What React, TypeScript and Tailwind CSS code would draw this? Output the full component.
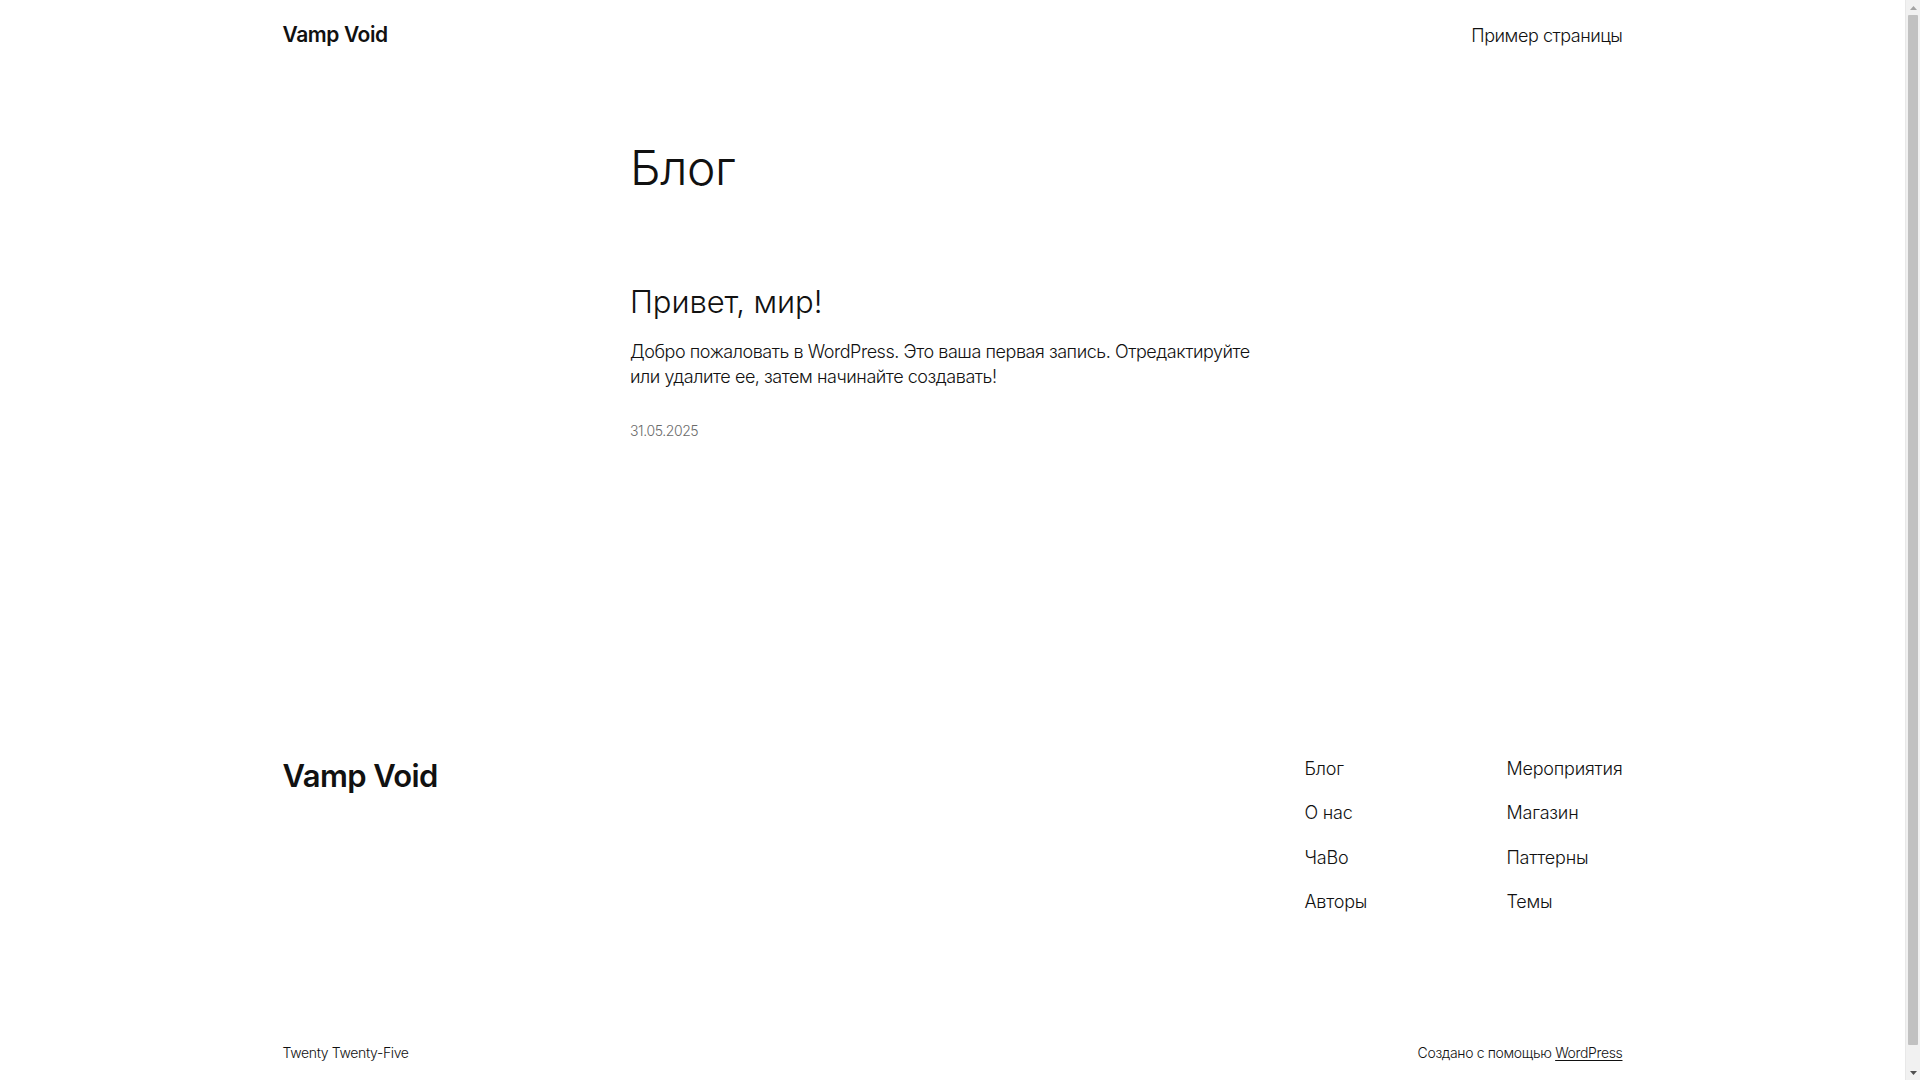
import React from 'react';

// ─── Data ─────────────────────────────────────────────────────────────────────

const FOOTER_COL_1 = ['Блог', 'О нас', 'ЧаВо', 'Авторы'];
const FOOTER_COL_2 = ['Мероприятия', 'Магазин', 'Паттерны', 'Темы'];

// ─── Browser scrollbar (window chrome seen in the screenshot) ────────────────

const Scrollbar: React.FC = () => (
  <div className="fixed right-0 top-0 flex h-screen w-[15px] flex-col border-l border-[#e8e8e8] bg-[#f1f1f1]">
    <div className="flex h-[15px] items-center justify-center">
      <svg width="7" height="4" viewBox="0 0 7 4"><path d="M0 4 L3.5 0 L7 4 Z" fill="#a3a3a3" /></svg>
    </div>
    <div className="mx-[2px] flex-1 rounded-[1px] bg-[#c1c1c1] mb-[20px]" />
    <div className="flex h-[15px] items-center justify-center">
      <svg width="7" height="4" viewBox="0 0 7 4"><path d="M0 0 L3.5 4 L7 0 Z" fill="#505050" /></svg>
    </div>
  </div>
);

// ─── Component ───────────────────────────────────────────────────────────────

const App: React.FC = () => {
  return (
    <div
      className="min-h-screen bg-white text-[#111111] antialiased"
      style={{ fontFamily: 'Inter, "Noto Sans", "Liberation Sans", sans-serif' }}
    >
      <div className="mr-[15px]">
        {/* Header */}
        <header className="mx-auto flex h-[70px] max-w-[1340px] items-center justify-between">
          <a className="text-[21px] font-semibold tracking-[-0.4px]">Vamp Void</a>
          <nav>
            <a className="text-[18px] font-light tracking-[-0.45px]">Пример страницы</a>
          </nav>
        </header>

        {/* Main */}
        <main className="mx-auto max-w-[645px]">
          <h1 className="mt-[71px] text-[48px] font-light leading-[1.125] tracking-[-0.5px]">Блог</h1>

          <article className="mt-[90px]">
            <h2 className="text-[31px] font-light leading-[1.125] tracking-[-0.1px]">Привет, мир!</h2>
            <p className="mt-[19px] text-[18px] font-light leading-[1.4] tracking-[-0.45px]">
              Добро пожаловать в WordPress. Это ваша первая запись. Отредактируйте
              или удалите ее, затем начинайте создавать!
            </p>
            <p className="mt-[32px] text-[14px] font-light leading-[1.4] tracking-[-0.4px] text-[#6b6b6b]">
              31.05.2025
            </p>
          </article>
        </main>

        {/* Footer */}
        <footer className="mx-auto mt-[313px] max-w-[1340px] pb-[50px]">
          <div className="flex items-start justify-between">
            <a className="mt-[5px] text-[31px] font-semibold leading-[1.125] tracking-[-0.6px]">Vamp Void</a>
            <div className="mt-[2px] flex">
              <ul className="flex w-[202px] flex-col gap-[19.5px]">
                {FOOTER_COL_1.map((item) => (
                  <li key={item} className="text-[18px] font-light leading-[25px] tracking-[-0.2px]">
                    {item}
                  </li>
                ))}
              </ul>
              <ul className="flex flex-col gap-[19.5px]">
                {FOOTER_COL_2.map((item) => (
                  <li key={item} className="text-[18px] font-light leading-[25px] tracking-[-0.2px]">
                    {item}
                  </li>
                ))}
              </ul>
            </div>
          </div>

          <div className="mt-[129px] flex items-center justify-between text-[14px] font-light leading-[1.4] tracking-[-0.35px]">
            <p>Twenty Twenty-Five</p>
            <p>
              Создано с помощью <a className="underline underline-offset-2">WordPress</a>
            </p>
          </div>
        </footer>
      </div>

      <Scrollbar />
    </div>
  );
};

export default App;
